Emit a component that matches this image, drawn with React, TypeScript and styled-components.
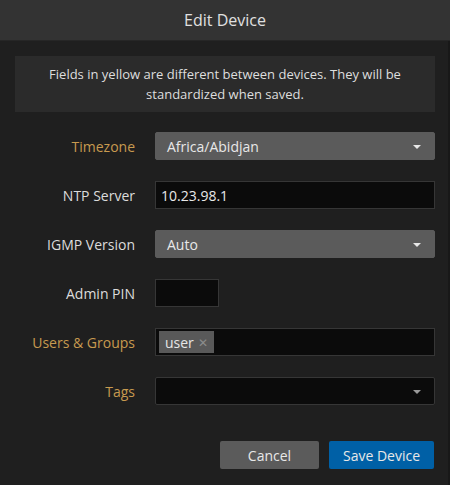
import React from 'react';
import styled, { createGlobalStyle } from 'styled-components';

const Global = createGlobalStyle`
  html, body {
    margin: 0;
    padding: 0;
    background: #1f1f1f;
  }
  * { box-sizing: border-box; }
`;

const Dialog = styled.div`
  width: 450px;
  height: 485px;
  font-family: 'Open Sans', Lato, sans-serif;
  background: #1f1f1f;
  color: #dcdcdc;
  display: flex;
  flex-direction: column;
`;

const Header = styled.header`
  height: 41px;
  background: #333333;
  border-bottom: 1px solid #262626;
  display: flex;
  align-items: center;
  justify-content: center;
  font-size: 16px;
  color: #e0e0e0;
`;

const Body = styled.div`
  flex: 1;
  padding: 15px 13px 0 15px;
  border-right: 2px solid #181818;
`;

const Notice = styled.div`
  background: #2b2b2b;
  height: 56px;
  padding: 8px 10px;
  text-align: center;
  font-size: 13px;
  line-height: 20px;
  color: #dedede;
`;

const Form = styled.div`
  display: flex;
  flex-direction: column;
  gap: 21px;
  margin-top: 20px;
`;

const Row = styled.div`
  display: grid;
  grid-template-columns: 120px 280px;
  column-gap: 20px;
  align-items: center;
`;

const Label = styled.label<{ $diff?: boolean }>`
  text-align: right;
  font-size: 14px;
  color: ${(p) => (p.$diff ? '#c79a4f' : '#dcdcdc')};
`;

const Select = styled.div<{ $dark?: boolean }>`
  height: 28px;
  width: 280px;
  border-radius: 2px;
  background: ${(p) => (p.$dark ? '#0b0b0b' : '#5b5b5b')};
  border: 1px solid ${(p) => (p.$dark ? '#363636' : '#5b5b5b')};
  display: flex;
  align-items: center;
  justify-content: space-between;
  padding: 0 13px 0 11px;
  font-size: 14px;
  color: #e8e8e8;
`;

const Caret = styled.span<{ $dim?: boolean }>`
  width: 0;
  height: 0;
  border-left: 4px solid transparent;
  border-right: 4px solid transparent;
  border-top: 4px solid ${(p) => (p.$dim ? '#9a9a9a' : '#e8e8e8')};
  margin-top: 1px;
`;

const Input = styled.div<{ $w?: number }>`
  height: 28px;
  width: ${(p) => p.$w ?? 280}px;
  background: #0b0b0b;
  border: 1px solid #363636;
  display: flex;
  align-items: center;
  padding: 0 5px;
  font-size: 14px;
  color: #e8e8e8;
`;

const Chip = styled.span`
  height: 22px;
  background: #595959;
  display: inline-flex;
  align-items: center;
  gap: 4px;
  padding: 0 6px;
  margin-left: -2px;
  font-size: 14px;
  color: #e6e6e6;
`;

const ChipX = styled.span`
  color: #8c8c8c;
  font-size: 12px;
`;

const Footer = styled.div`
  display: flex;
  justify-content: flex-end;
  gap: 10px;
  margin-top: 36px;
  margin-right: 1px;
`;

const Button = styled.button<{ $primary?: boolean }>`
  height: 28px;
  width: ${(p) => (p.$primary ? 105 : 99)}px;
  border: none;
  border-radius: 2px;
  font-family: inherit;
  font-size: 14px;
  color: #e8e8e8;
  background: ${(p) => (p.$primary ? '#0060a6' : '#5b5b5b')};
  cursor: pointer;
`;

const App: React.FC = () => {
  return (
    <Dialog>
      <Global />
      <Header>Edit Device</Header>
      <Body>
        <Notice>
          Fields in yellow are different between devices. They will be standardized when saved.
        </Notice>
        <Form>
          <Row>
            <Label $diff>Timezone</Label>
            <Select>
              Africa/Abidjan
              <Caret />
            </Select>
          </Row>
          <Row>
            <Label>NTP Server</Label>
            <Input>10.23.98.1</Input>
          </Row>
          <Row>
            <Label>IGMP Version</Label>
            <Select>
              Auto
              <Caret />
            </Select>
          </Row>
          <Row>
            <Label>Admin PIN</Label>
            <Input $w={64} />
          </Row>
          <Row>
            <Label $diff>Users &amp; Groups</Label>
            <Input>
              <Chip>
                user <ChipX>✕</ChipX>
              </Chip>
            </Input>
          </Row>
          <Row>
            <Label $diff>Tags</Label>
            <Select $dark>
              <span />
              <Caret $dim />
            </Select>
          </Row>
        </Form>
        <Footer>
          <Button type="button">Cancel</Button>
          <Button type="button" $primary>
            Save Device
          </Button>
        </Footer>
      </Body>
    </Dialog>
  );
};

export default App;
